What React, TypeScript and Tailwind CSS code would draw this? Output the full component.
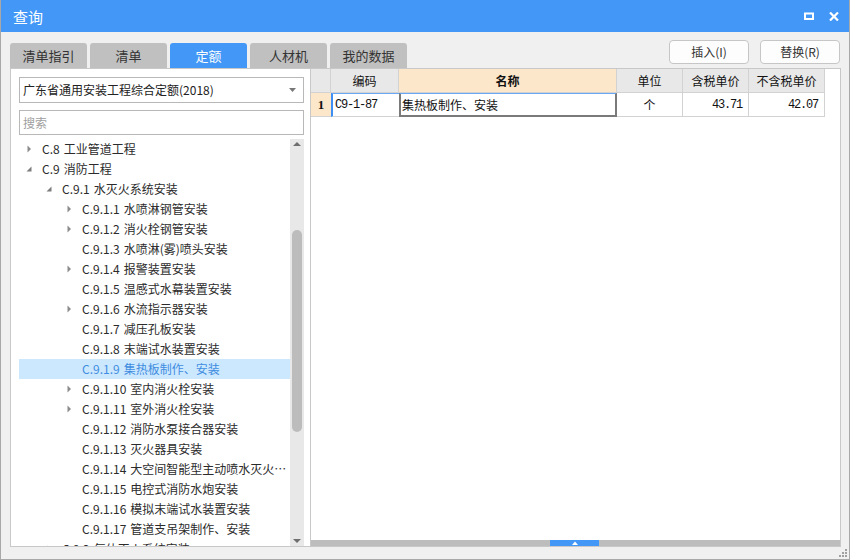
import React from "react";

type Node = { l: number; a: "" | "c" | "e"; t: string; sel?: boolean };

const tree: Node[] = [
  { l: 0, a: "c", t: "C.8 工业管道工程" },
  { l: 0, a: "e", t: "C.9 消防工程" },
  { l: 1, a: "e", t: "C.9.1 水灭火系统安装" },
  { l: 2, a: "c", t: "C.9.1.1 水喷淋钢管安装" },
  { l: 2, a: "c", t: "C.9.1.2 消火栓钢管安装" },
  { l: 2, a: "", t: "C.9.1.3 水喷淋(雾)喷头安装" },
  { l: 2, a: "c", t: "C.9.1.4 报警装置安装" },
  { l: 2, a: "", t: "C.9.1.5 温感式水幕装置安装" },
  { l: 2, a: "c", t: "C.9.1.6 水流指示器安装" },
  { l: 2, a: "", t: "C.9.1.7 减压孔板安装" },
  { l: 2, a: "", t: "C.9.1.8 末端试水装置安装" },
  { l: 2, a: "", t: "C.9.1.9 集热板制作、安装", sel: true },
  { l: 2, a: "c", t: "C.9.1.10 室内消火栓安装" },
  { l: 2, a: "c", t: "C.9.1.11 室外消火栓安装" },
  { l: 2, a: "", t: "C.9.1.12 消防水泵接合器安装" },
  { l: 2, a: "", t: "C.9.1.13 灭火器具安装" },
  { l: 2, a: "", t: "C.9.1.14 大空间智能型主动喷水灭火装置安装" },
  { l: 2, a: "", t: "C.9.1.15 电控式消防水炮安装" },
  { l: 2, a: "", t: "C.9.1.16 模拟末端试水装置安装" },
  { l: 2, a: "", t: "C.9.1.17 管道支吊架制作、安装" },
  { l: 1, a: "c", t: "C.9.2 气体灭火系统安装" },
];

const tabs = ["清单指引", "清单", "定额", "人材机", "我的数据"];

function Arrow({ a }: { a: "" | "c" | "e" }) {
  if (a === "c")
    return (
      <svg width="5" height="8" viewBox="0 0 5 8">
        <path d="M0.5 0.5 L4 4 L0.5 7.5Z" fill="#8c8c8c" />
      </svg>
    );
  if (a === "e")
    return (
      <svg width="6" height="6" viewBox="0 0 6 6">
        <path d="M5.5 0.5 L5.5 5.5 L0.5 5.5Z" fill="#7c7c7c" />
      </svg>
    );
  return null;
}

export default function App() {
  const cjk = "font-['Noto_Sans_CJK_SC',sans-serif]";
  return (
    <div
      className={`relative w-[850px] h-[560px] bg-[#f0f0f0] border-x border-b border-[#a8a8a8] flex flex-col ${cjk} text-[#333]`}
    >
      {/* Title bar */}
      <div className="h-[32px] bg-[#4398f7] flex items-center pl-[12px] pr-[10px] shrink-0">
        <span className="text-white text-[15px] leading-none">查询</span>
        <div className="ml-auto flex items-center gap-[15px]">
          <svg width="10" height="8" viewBox="0 0 10 8">
            <rect x="1" y="1.5" width="8" height="5.5" fill="none" stroke="#fff" strokeWidth="2" />
          </svg>
          <svg width="10" height="9" viewBox="0 0 10 9">
            <path d="M1 0.5 L9 8.5 M9 0.5 L1 8.5" stroke="#fff" strokeWidth="2.2" />
          </svg>
        </div>
      </div>

      {/* Tabs + buttons */}
      <div className="h-[36px] flex pl-[9px] pr-[9px] shrink-0">
        <div className="flex gap-[3px] mt-[11px]">
          {tabs.map((t, i) => (
            <div
              key={t}
              className={
                i === 2
                  ? "w-[77px] h-[25px] rounded-t-[3px] bg-[#4398f7] text-white text-[13px] flex items-center justify-center"
                  : "w-[77px] h-[25px] rounded-t-[3px] bg-[#c0c0c0] text-[#333] text-[13px] flex items-center justify-center"
              }
            >
              {t}
            </div>
          ))}
        </div>
        <div className="ml-auto flex gap-[11px] mt-[8px]">
          <div className="w-[80px] h-[24px] bg-[#fdfdfd] border border-[#c6c6c6] rounded-[4px] text-[12px] text-[#333] flex items-center justify-center">
            插入(I)
          </div>
          <div className="w-[80px] h-[24px] bg-[#fdfdfd] border border-[#c6c6c6] rounded-[4px] text-[12px] text-[#333] flex items-center justify-center">
            替换(R)
          </div>
        </div>
      </div>

      {/* Panels */}
      <div className="ml-[9px] w-[831px] h-[479px] border border-[#c8c8c8] bg-white flex shrink-0">
        {/* Left */}
        <div className="w-[300px] border-r border-[#c8c8c8] flex flex-col pl-[8px] pr-[6px] pt-[8px]">
          <div className="h-[26px] border border-[#b8b8b8] flex items-center pl-[3px] pr-[7px] text-[12px] text-[#222] shrink-0">
            <span>广东省通用安装工程综合定额(2018)</span>
            <svg className="ml-auto" width="7" height="4" viewBox="0 0 7 4">
              <path d="M0 0 L7 0 L3.5 4Z" fill="#777" />
            </svg>
          </div>
          <div className="mt-[7px] h-[25px] border border-[#b8b8b8] flex items-center pl-[3px] text-[12px] text-[#a0a0a0] shrink-0">
            搜索
          </div>
          <div className="mt-[4px] flex-1 flex overflow-hidden min-h-0">
            <div className="w-[271px] flex flex-col">
              {tree.map((n, i) => {
                const sp = n.t.indexOf(" ");
                const code = n.t.slice(0, sp);
                const name = n.t.slice(sp + 1);
                return (
                  <div
                    key={i}
                    className={
                      n.sel
                        ? "h-[20px] shrink-0 flex items-center bg-[#cce8ff] text-[#3f8de0]"
                        : "h-[20px] shrink-0 flex items-center text-[#2b2b2b]"
                    }
                  >
                    <div className={n.l === 0 ? "w-0 shrink-0" : n.l === 1 ? "w-[20px] shrink-0" : "w-[40px] shrink-0"} />
                    <div className="w-[20px] shrink-0 flex items-center justify-center">
                      <Arrow a={n.a} />
                    </div>
                    <span className="ml-[3px] pr-[1px] text-[12px] leading-[20px] truncate">
                      {code}
                      <span className="inline-block w-[4px]" />
                      {name}
                    </span>
                  </div>
                );
              })}
            </div>
            <div className="relative w-[14px] bg-[#e8e8e8]">
              <svg className="absolute left-[3px] top-[3px]" width="8" height="4" viewBox="0 0 8 4">
                <path d="M0 4 L4 0 L8 4Z" fill="#6e6e6e" />
              </svg>
              <div className="absolute left-[2px] top-[91px] w-[10px] h-[202px] rounded-full bg-[#bcbcbc]" />
              <svg className="absolute left-[3px] bottom-[3px]" width="8" height="4" viewBox="0 0 8 4">
                <path d="M0 0 L8 0 L4 4Z" fill="#6e6e6e" />
              </svg>
            </div>
          </div>
        </div>

        {/* Right */}
        <div className="flex-1 flex flex-col">
          <div className="flex-1 min-h-0">
            {/* header */}
            <div className="flex h-[24px] text-[12px] text-[#111]">
              <div className="w-[20px] bg-[#e8e8e8] border-r border-b border-[#d2d2d2]" />
              <div className="w-[68px] bg-[#e8e8e8] border-r border-b border-[#d2d2d2] flex items-center justify-center">编码</div>
              <div className="w-[218px] bg-[#fde7ca] border-r border-b border-[#d2d2d2] flex items-center justify-center font-bold">名称</div>
              <div className="w-[66px] bg-[#e8e8e8] border-r border-b border-[#d2d2d2] flex items-center justify-center">单位</div>
              <div className="w-[66px] bg-[#e8e8e8] border-r border-b border-[#d2d2d2] flex items-center justify-center">含税单价</div>
              <div className="w-[76px] bg-[#e8e8e8] border-r border-b border-[#d2d2d2] flex items-center justify-center">不含税单价</div>
            </div>
            {/* data row */}
            <div className="flex h-[24px] text-[12px] text-[#111]">
              <div className="w-[20px] bg-[#fde7ca] border-b border-[#d2d2d2] flex items-center justify-center font-['Liberation_Serif',serif] font-bold text-[13px]">
                1
              </div>
              <div className="w-[68px] border-l-2 border-l-[#3d8ef5] border-t border-t-[#6aa8f5] border-b border-b-[#d2d2d2] flex items-center pl-[2px] font-['Liberation_Mono',monospace] text-[12px] tracking-[-1.2px]">
                C9-1-87
              </div>
              <div className="w-[218px] border-t border-t-[#6aa8f5] border-l-2 border-l-[#7a7a7a] border-r-2 border-r-[#7a7a7a] border-b-2 border-b-[#7a7a7a] flex items-center pl-[1px] text-[12px]">
                集热板制作、安装
              </div>
              <div className="w-[66px] border-r border-b border-[#d2d2d2] flex items-center justify-center">个</div>
              <div className="w-[66px] border-r border-b border-[#d2d2d2] flex items-center justify-end pr-[6px] font-['Liberation_Mono',monospace] text-[12px] tracking-[-1.2px]">
                43.71
              </div>
              <div className="w-[76px] border-r border-b border-[#d2d2d2] flex items-center justify-end pr-[6px] font-['Liberation_Mono',monospace] text-[12px] tracking-[-1.2px]">
                42.07
              </div>
            </div>
          </div>
          <div className="h-[6px] flex shrink-0">
            <div className="w-[239px] bg-[#bdbdbd]" />
            <div className="w-[49px] bg-[#4398f7] flex items-center justify-center">
              <svg width="6" height="4" viewBox="0 0 6 4">
                <path d="M0 4 L3 0.5 L6 4Z" fill="#fff" />
              </svg>
            </div>
            <div className="flex-1 bg-[#bdbdbd]" />
          </div>
        </div>
      </div>

      {/* Resize grip */}
      <svg className="absolute right-[1px] bottom-[1px]" width="10" height="10" viewBox="0 0 10 10">
        <rect x="7" y="1" width="2" height="2" fill="#a0a0a0" />
        <rect x="4" y="4" width="2" height="2" fill="#a0a0a0" />
        <rect x="7" y="4" width="2" height="2" fill="#a0a0a0" />
        <rect x="1" y="7" width="2" height="2" fill="#a0a0a0" />
        <rect x="4" y="7" width="2" height="2" fill="#a0a0a0" />
        <rect x="7" y="7" width="2" height="2" fill="#a0a0a0" />
      </svg>
    </div>
  );
}
